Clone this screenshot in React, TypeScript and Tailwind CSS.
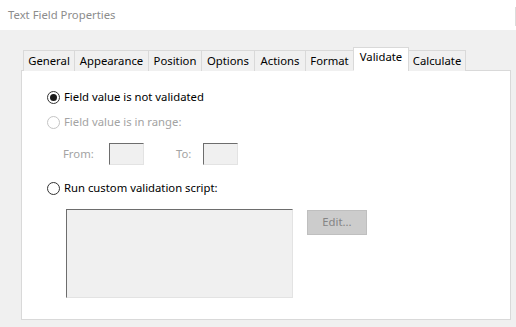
import React from "react";

const tabs = ["General", "Appearance", "Position", "Options", "Actions", "Format", "Validate", "Calculate"];
const widths: Record<string, number> = {
  General: 52,
  Appearance: 75,
  Position: 54,
  Options: 54,
  Actions: 52,
  Format: 49,
  Validate: 56,
  Calculate: 58,
};

function Radio({ checked, disabled }: { checked?: boolean; disabled?: boolean }) {
  return (
    <span
      className={`flex h-[13px] w-[13px] shrink-0 items-center justify-center rounded-full border bg-white ${
        disabled ? "border-[#c4c4c4]" : "border-[#333333]"
      }`}
    >
      {checked && <span className="h-[7px] w-[7px] rounded-full bg-[#1a1a1a]" />}
    </span>
  );
}

function SunkenBox({ className }: { className: string }) {
  return (
    <div
      className={`border border-t-[#6d6d6d] border-l-[#6d6d6d] border-r-[#e3e3e3] border-b-[#e3e3e3] bg-[#f0f0f0] ${className}`}
    />
  );
}

export default function App() {
  return (
    <div
      className="h-[327px] w-[516px] overflow-hidden bg-[#f0f0f0] text-[11.3px] text-black"
      style={{ fontFamily: '"Noto Sans", "Open Sans", sans-serif' }}
    >
      <div className="relative h-[30px] bg-white">
        <span className="absolute left-[8px] top-[7px] text-[11.3px] text-[#8c8c8c]">Text Field Properties</span>
        <span className="absolute right-0 top-[7px] h-[19px] w-px bg-[#dcdcdc]" />
      </div>

      <div className="ml-[21px] mt-[17px] w-[490px]">
        <div className="relative z-10 -mb-px flex items-end pl-[2px]">
          {tabs.map((t) => {
            const active = t === "Validate";
            return (
              <div
                key={t}
                style={{ width: widths[t] }}
                className={`-ml-px flex items-center justify-center border border-[#d9d9d9] first:ml-0 ${
                  active
                    ? "h-[24px] border-b-white bg-white pb-[3px]"
                    : "h-[21px] border-b-0 bg-[#f0f0f0]"
                }`}
              >
                {t}
              </div>
            );
          })}
        </div>

        <div className="h-[250px] border border-[#d9d9d9] bg-white pl-[25px] pt-[18px]">
          <div className="flex h-[16px] items-center gap-[4px]">
            <Radio checked />
            <span>Field value is not validated</span>
          </div>

          <div className="mt-[9px] flex h-[16px] items-center gap-[4px] text-[#a3a3a3]">
            <Radio disabled />
            <span>Field value is in range:</span>
          </div>

          <div className="mt-[13px] flex h-[22px] items-center pl-[16px] text-[#a3a3a3]">
            <span className="w-[46px]">From:</span>
            <SunkenBox className="h-[22px] w-[35px]" />
            <span className="ml-[32px] w-[27px]">To:</span>
            <SunkenBox className="h-[22px] w-[35px]" />
          </div>

          <div className="mt-[15px] flex h-[16px] items-center gap-[4px]">
            <Radio />
            <span>Run custom validation script:</span>
          </div>

          <div className="mt-[13px] flex items-start pl-[19px]">
            <SunkenBox className="h-[89px] w-[227px]" />
            <button className="ml-[14px] mt-px flex h-[25px] w-[60px] items-center justify-center border border-[#bfbfbf] bg-[#cccccc] text-[#848484]">
              Edit...
            </button>
          </div>
        </div>
      </div>
    </div>
  );
}
